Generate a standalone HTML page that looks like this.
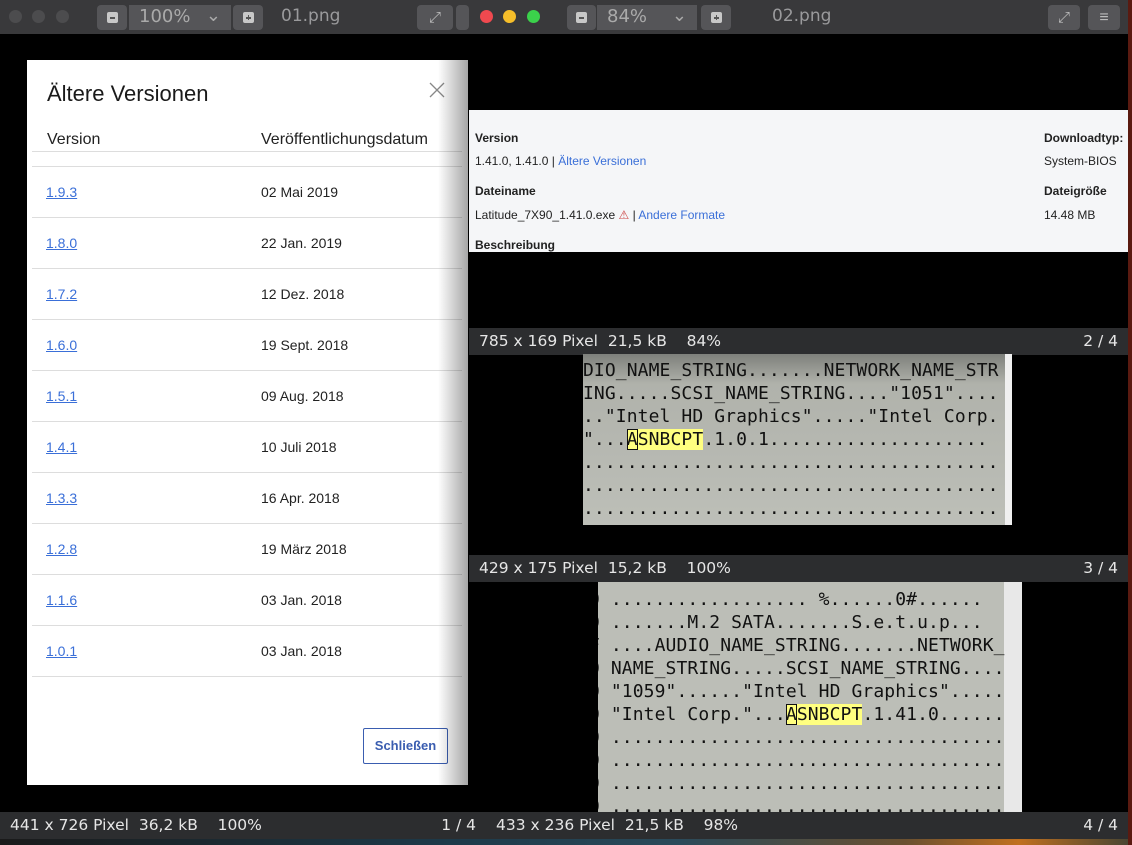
<!DOCTYPE html>
<html><head><meta charset="utf-8"><style>
*{margin:0;padding:0;box-sizing:border-box}
body{width:1132px;height:845px;background:#000;position:relative;overflow:hidden;font-family:"Liberation Sans",sans-serif}
.a{position:absolute}
.tb{background:#39393b;height:34px}
.btn{position:absolute;top:5px;height:25px;background:#555558;border-radius:4px}
.sq{position:absolute;left:50%;top:50%;width:11px;height:11px;margin:-5.5px;background:#c8c8c8;border-radius:2px}
.sq:after{content:"";position:absolute;left:3px;top:5px;width:5px;height:1.5px;background:#555}
.pl:before{content:"";position:absolute;left:5px;top:3px;width:1.5px;height:5px;background:#555}
.ttl{position:absolute;top:6px;color:#9a9a9c;font:17px "DejaVu Sans",sans-serif}
.sel{color:#aaa;font:18px "DejaVu Sans",sans-serif;padding:1px 10px}
.sb{background:#2c2d2f;color:#e6e6e6;font:15.5px "DejaVu Sans",sans-serif;height:27px;line-height:27px;padding-left:10px}
.sb span.r{position:absolute;right:10px;top:0}
.dlg{left:27px;top:60px;width:441px;height:725px;background:#fff}
.row{position:absolute;left:5px;width:430px;height:51px;border-top:1px solid #ddd}
.row .v{position:absolute;left:14px;top:17px;color:#3a6fd8;text-decoration:underline;font-size:14px}
.row .d{position:absolute;left:229px;top:17px;color:#222;font-size:14px}
.mono{font:18px/23px "DejaVu Sans Mono",monospace;color:#111;white-space:pre;position:absolute;letter-spacing:0.1px}
.hl{background:#ffff80}
.bx{outline:1.5px solid #111;outline-offset:-1px}
.img{background:linear-gradient(#7e807b 0px,#b0b2ab 30px,#bdbfb8 100%)}
.i2{font-size:12px}
</style></head><body>
<!-- left window title -->
<div class="a tb" style="left:0;top:0;width:469px"></div>
<div class="a" style="left:9px;top:10px;width:13px;height:13px;border-radius:50%;background:#4c4c4e"></div>
<div class="a" style="left:32px;top:10px;width:13px;height:13px;border-radius:50%;background:#4c4c4e"></div>
<div class="a" style="left:56px;top:10px;width:13px;height:13px;border-radius:50%;background:#4c4c4e"></div>
<div class="btn" style="left:97px;width:30px"><div class="sq"></div></div>
<div class="btn sel" style="left:129px;width:102px;border-radius:0">100%<span style="position:absolute;right:10px;top:0">⌄</span></div>
<div class="btn" style="left:233px;width:30px"><div class="sq pl"></div></div>
<div class="ttl" style="left:281px">01.png</div>
<div class="btn" style="left:417px;width:36px;color:#bbb;font-size:15px;text-align:center;line-height:25px">⤢</div>
<div class="btn" style="left:456px;width:13px"></div>
<!-- dialog -->
<div class="a dlg">
 <div class="a" style="left:20px;top:21px;font-size:22px;color:#1a1a1a">Ältere Versionen</div>
 <svg class="a" style="left:402px;top:22px" width="16" height="16"><path d="M1 1L15 15M15 1L1 15" stroke="#888" stroke-width="1.3"/></svg>
 <div class="a" style="left:20px;top:71px;font-size:16px;color:#222">Version</div>
 <div class="a" style="left:234px;top:71px;font-size:16px;color:#222">Veröffentlichungsdatum</div>
 <div class="a" style="left:5px;top:91px;width:430px;border-top:1px solid #ddd"></div>
 <div class="row" style="top:106px"><span class="v">1.9.3</span><span class="d">02 Mai 2019</span></div>
 <div class="row" style="top:157px"><span class="v">1.8.0</span><span class="d">22 Jan. 2019</span></div>
 <div class="row" style="top:208px"><span class="v">1.7.2</span><span class="d">12 Dez. 2018</span></div>
 <div class="row" style="top:259px"><span class="v">1.6.0</span><span class="d">19 Sept. 2018</span></div>
 <div class="row" style="top:310px"><span class="v">1.5.1</span><span class="d">09 Aug. 2018</span></div>
 <div class="row" style="top:361px"><span class="v">1.4.1</span><span class="d">10 Juli 2018</span></div>
 <div class="row" style="top:412px"><span class="v">1.3.3</span><span class="d">16 Apr. 2018</span></div>
 <div class="row" style="top:463px"><span class="v">1.2.8</span><span class="d">19 März 2018</span></div>
 <div class="row" style="top:514px"><span class="v">1.1.6</span><span class="d">03 Jan. 2018</span></div>
 <div class="row" style="top:565px"><span class="v">1.0.1</span><span class="d">03 Jan. 2018</span></div>
 <div class="a" style="left:5px;top:616px;width:430px;border-top:1px solid #ddd"></div>
 <div class="a" style="left:336px;top:668px;width:85px;height:36px;border:1px solid #3a5db0;border-radius:2px;color:#3a5db0;font-size:13px;font-weight:bold;text-align:center;line-height:34px">Schließen</div>
 <div class="a" style="left:411px;top:0;width:30px;height:725px;background:linear-gradient(90deg,rgba(0,0,0,0),rgba(0,0,0,.35))"></div>
</div>
<div class="a sb" style="left:0;top:812px;width:486px">441 x 726 Pixel&nbsp; 36,2 kB &nbsp;&nbsp; 100%<span class="r">1 / 4</span></div>
<div class="a" style="left:0;top:839px;width:1132px;height:6px;background:linear-gradient(90deg,#1a1a1a,#1d3a4a 40%,#2a4a5a 60%,#6a5030 80%,#c07020 90%,#443)"></div>
<!-- right window -->
<div class="a tb" style="left:469px;top:0;width:659px"></div>
<div class="a" style="left:480px;top:10px;width:13px;height:13px;border-radius:50%;background:#f0494f"></div>
<div class="a" style="left:503px;top:10px;width:13px;height:13px;border-radius:50%;background:#f6be2a"></div>
<div class="a" style="left:527px;top:10px;width:13px;height:13px;border-radius:50%;background:#3bd14b"></div>
<div class="btn" style="left:567px;width:29px"><div class="sq"></div></div>
<div class="btn sel" style="left:597px;width:100px;border-radius:0">84%<span style="position:absolute;right:10px;top:0">⌄</span></div>
<div class="btn" style="left:701px;width:30px"><div class="sq pl"></div></div>
<div class="ttl" style="left:772px">02.png</div>
<div class="btn" style="left:1048px;width:32px;color:#bbb;font-size:15px;text-align:center;line-height:25px">⤢</div>
<div class="btn" style="left:1088px;width:32px;color:#bbb;font-size:16px;text-align:center;line-height:25px">≡</div>
<div class="a" style="left:1128px;top:0;width:4px;height:845px;background:#5a1a10"></div>
<!-- image 2 -->
<div class="a i2" style="left:469px;top:110px;width:659px;height:142px;background:#f5f6f8;color:#222">
 <div class="a" style="left:6px;top:21px;font-weight:bold">Version</div>
 <div class="a" style="left:6px;top:44px">1.41.0, 1.41.0 | <span style="color:#3a6fd8">Ältere Versionen</span></div>
 <div class="a" style="left:6px;top:74px;font-weight:bold">Dateiname</div>
 <div class="a" style="left:6px;top:98px">Latitude_7X90_1.41.0.exe <span style="color:#c44">⚠</span> | <span style="color:#3a6fd8">Andere Formate</span></div>
 <div class="a" style="left:6px;top:128px;font-weight:bold">Beschreibung</div>
 <div class="a" style="left:575px;top:21px;font-weight:bold">Downloadtyp:</div>
 <div class="a" style="left:575px;top:44px">System-BIOS</div>
 <div class="a" style="left:575px;top:74px;font-weight:bold">Dateigröße</div>
 <div class="a" style="left:575px;top:98px">14.48 MB</div>
</div>
<div class="a sb" style="left:469px;top:328px;width:659px">785 x 169 Pixel&nbsp; 21,5 kB &nbsp;&nbsp; 84%<span class="r">2 / 4</span></div>
<!-- image 3 -->
<div class="a img" style="left:583px;top:354px;width:429px;height:171px;overflow:hidden">
 <div class="a" style="right:0;top:0;width:7px;height:171px;background:#f0f0f0"></div>
 <div class="mono" style="left:0;top:5px">DIO_NAME_STRING.......NETWORK_NAME_STR
ING.....SCSI_NAME_STRING...."1051"....
.."Intel HD Graphics"....."Intel Corp.
"...<span class="hl bx">A</span><span class="hl">SNBCPT</span>.1.0.1....................
......................................
......................................
......................................</div>
</div>
<div class="a sb" style="left:469px;top:555px;width:659px">429 x 175 Pixel&nbsp; 15,2 kB &nbsp;&nbsp; 100%<span class="r">3 / 4</span></div>
<!-- image 4 -->
<div class="a img" style="left:598px;top:582px;width:424px;height:230px;overflow:hidden;background:#bcbeb7">
 <div class="a" style="left:406px;top:0;width:18px;height:230px;background:#e8e8e8"></div>
 <div class="mono" style="left:-9px;top:6px">0 .................. %......0#......
0 .......M.2 SATA.......S.e.t.u.p...
F ....AUDIO_NAME_STRING.......NETWORK_
0 NAME_STRING.....SCSI_NAME_STRING....
0 "1059"......"Intel HD Graphics".....
0 "Intel Corp."...<span class="hl bx">A</span><span class="hl">SNBCPT</span>.1.41.0......
0 ....................................
0 ....................................
0 ....................................
0 ....................................</div>
</div>
<div class="a sb" style="left:486px;top:812px;width:642px">433 x 236 Pixel&nbsp; 21,5 kB &nbsp;&nbsp; 98%<span class="r">4 / 4</span></div>
</body></html>
